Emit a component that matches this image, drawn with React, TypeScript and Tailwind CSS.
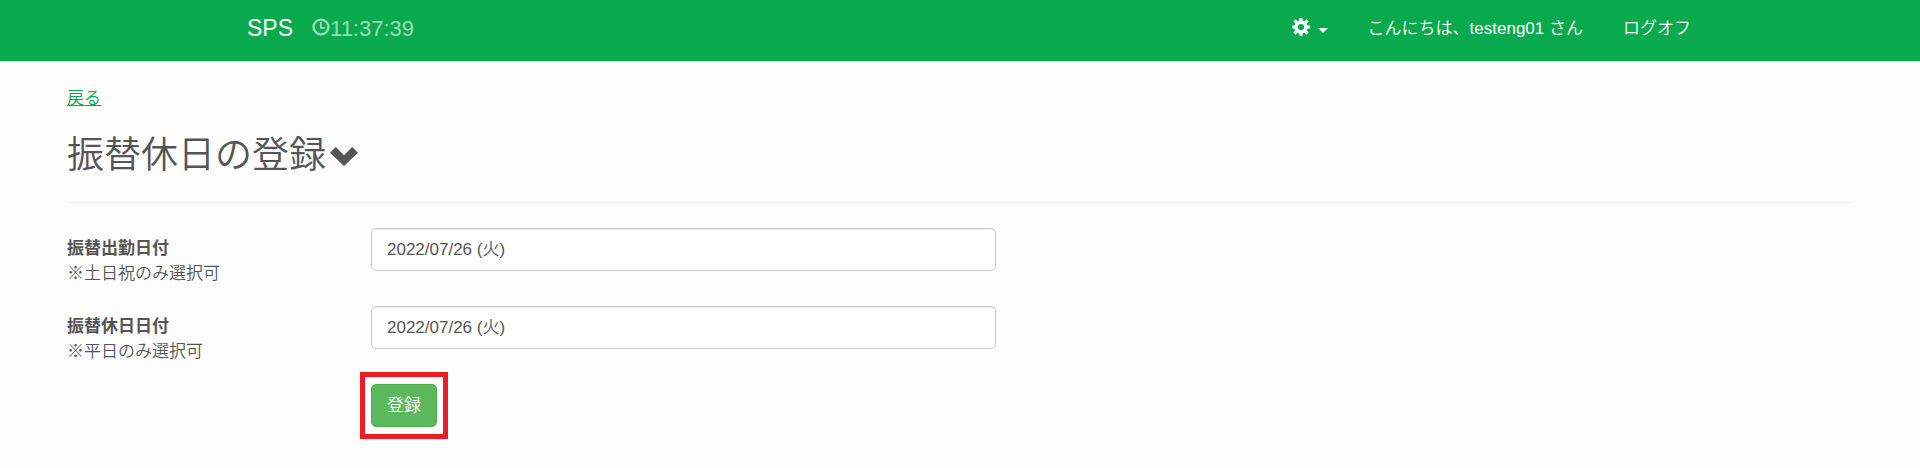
import { useState } from "react";

const fontStack = "font-['Liberation_Sans','Noto_Sans_CJK_JP',sans-serif]";

function ClockIcon() {
  return (
    <svg viewBox="0 0 18 18" className="mb-1 h-[18px] w-[18px]" fill="none" stroke="currentColor" aria-hidden="true">
      <circle cx="9" cy="9" r="7.4" strokeWidth="2.4" />
      <path d="M8.8 4v5.8h4" strokeWidth="1.8" />
    </svg>
  );
}

function CogIcon() {
  return (
    <svg viewBox="0 0 18 18" className="mb-1 h-[18px] w-[18px]" fill="none" stroke="currentColor" aria-hidden="true">
      <circle cx="9" cy="9" r="4.9" strokeWidth="3.6" />
      <g strokeWidth="3">
        <path d="M9 0v3M9 15v3M0 9h3M15 9h3" />
        <path d="M2.4 2.4l2.2 2.2M13.4 13.4l2.2 2.2M2.4 15.6l2.2-2.2M13.4 4.6l2.2-2.2" />
      </g>
    </svg>
  );
}

function ChevronDownIcon() {
  return (
    <svg viewBox="0 0 28 19" className="h-[19px] w-7" fill="currentColor" aria-hidden="true">
      <path d="M0 5.8 5.8 0 14 8.2 22.2 0 28 5.8 14 19z" />
    </svg>
  );
}

function Navbar() {
  return (
    <nav className="border-b border-[#c9e8d6] bg-[#08aa4d] text-white">
      <div className="mx-auto flex h-[61px] max-w-[1462px] items-center justify-between pb-1 pl-[18px]">
        <div className="flex items-center gap-[19px] text-[23px]">
          <a href="#">SPS</a>
          <span className="flex items-center text-[22px] text-white/60">
            <ClockIcon />
            11:37:39
          </span>
        </div>
        <div className="flex items-center gap-10">
          <button type="button" aria-label="設定" className="flex items-center gap-2">
            <CogIcon />
            <svg viewBox="0 0 10 5" className="mt-1 h-[5px] w-[10px]" fill="currentColor" aria-hidden="true">
              <path d="M0 0h10L5 5z" />
            </svg>
          </button>
          <a href="#">こんにちは、testeng01 さん</a>
          <a href="#">ログオフ</a>
        </div>
      </div>
    </nav>
  );
}

type DateRowProps = {
  id: string;
  label: string;
  note: string;
  value: string;
  onChange: (value: string) => void;
};

function DateRow({ id, label, note, value, onChange }: DateRowProps) {
  return (
    <div className="flex">
      <div className="w-1/6 px-[19px] pt-2">
        <label htmlFor={id} className="block font-bold">
          {label}
        </label>
        <p>{note}</p>
      </div>
      <div className="flex-1 px-[19px]">
        <input
          id={id}
          type="text"
          value={value}
          onChange={(e) => onChange(e.target.value)}
          className="h-[43px] w-full max-w-[625px] rounded-[5px] border border-[#cccccc] bg-white px-[15px] pb-1 shadow-[inset_0_1px_1px_rgba(0,0,0,0.075)]"
        />
      </div>
    </div>
  );
}

export default function App() {
  const [workDate, setWorkDate] = useState("2022/07/26 (火)");
  const [holiday, setHoliday] = useState("2022/07/26 (火)");

  return (
    <div className={`min-h-screen bg-[#fdfdfd] text-[17px] leading-[25px] font-[350] text-[#555555] ${fontStack}`}>
      <Navbar />
      <main className="px-12 pt-6">
        <div className="px-[19px]">
          <a href="#" className="text-[#08aa4d] underline">
            戻る
          </a>
          <h1 className="mt-[25px] flex items-center gap-1 text-[37px] leading-[40px]">
            振替休日の登録
            <ChevronDownIcon />
          </h1>
          <hr className="mt-[26px] border-[#eeeeee]" />
        </div>
        <form className="mt-[25px] flex flex-col gap-5" onSubmit={(e) => e.preventDefault()}>
          <DateRow id="work-date" label="振替出勤日付" note="※土日祝のみ選択可" value={workDate} onChange={setWorkDate} />
          <DateRow id="holiday-date" label="振替休日日付" note="※平日のみ選択可" value={holiday} onChange={setHoliday} />
          <div className="ml-[16.6667%] px-[19px]">
            <div className="relative inline-block">
              <button
                type="submit"
                className="h-[43px] rounded-[5px] border border-[#4cae4c] bg-[#5cb85c] px-[15px] text-white"
              >
                登録
              </button>
              <div className="pointer-events-none absolute -inset-x-[11px] -inset-y-3 border-[5px] border-[#ed1c24]" />
            </div>
          </div>
        </form>
      </main>
    </div>
  );
}
